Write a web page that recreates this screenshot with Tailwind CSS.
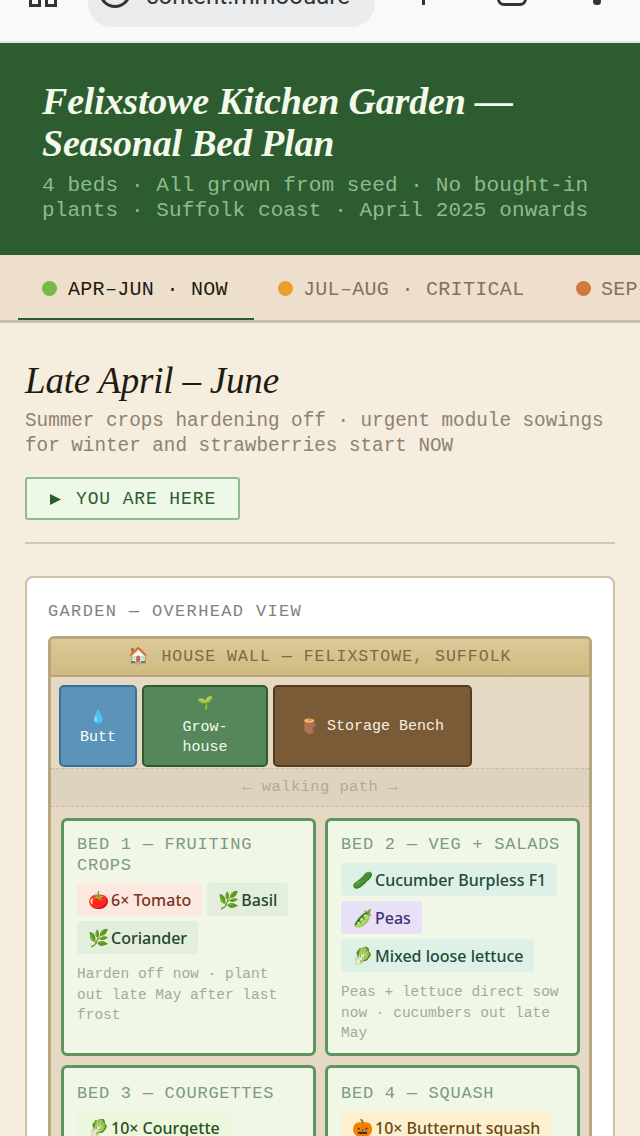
<!DOCTYPE html>
<html lang="en">
<head>
  <meta charset="UTF-8" />
  <meta name="viewport" content="width=device-width, initial-scale=1.0" />
  <title>Felixstowe Kitchen Garden</title>
  <script src="https://cdn.jsdelivr.net/npm/@tailwindcss/browser@4"></script>
</head>
<body class="bg-[#f5eddd] h-[1136px] overflow-hidden font-['Liberation_Mono',monospace] text-[#1f1a12]">

  <!-- browser bar, cut off at the top -->
  <div class="h-[43px] bg-[#f8f9fb] border-b-2 border-[#e3e6e8] overflow-hidden relative">
    <svg class="absolute left-[28px] top-0" width="30" height="8" viewBox="0 0 30 8" fill="none" stroke="#333" stroke-width="3"><path d="M2.5 0v5.5h9V0M18.500 0v5.500h9V0"/></svg>
    <div class="absolute left-[88px] top-[-20px] w-[287px] h-[47px] rounded-[24px] bg-[#e9ebed] flex items-center pl-[11px] gap-[15px]">
      <div class="w-[32px] h-[32px] rounded-full border-[3px] border-[#333] shrink-0 relative top-[-12px]"></div>
      <span class="text-[24px] text-[#333] relative top-[-8px] whitespace-nowrap font-['Roboto',sans-serif]">content.mmoouare</span>
    </div>
    <div class="absolute left-[422px] top-0 w-[3px] h-[5px] bg-[#333]"></div>
    <div class="absolute left-[497px] top-[-21px] w-[30px] h-[27px] rounded-[7px] border-[3px] border-[#333]"></div>
    <div class="absolute left-[593px] top-[-2px] w-[8px] h-[7px] rounded-full bg-[#333]"></div>
  </div>

  <!-- header -->
  <header class="h-[212px] bg-[#2d5c30] pl-[42px] pr-[40px] pt-[37px]">
    <h1 class="font-['Liberation_Serif',serif] italic font-bold text-[38px] leading-[42px] text-[#f3faec] tracking-[-0.2px]">Felixstowe Kitchen Garden —<br>Seasonal Bed Plan</h1>
    <p class="mt-[9px] text-[21px] leading-[25px] tracking-[0.1px] text-[#8fbb8d]">4 beds · All grown from seed · No bought-in plants · Suffolk coast · April 2025 onwards</p>
  </header>

  <!-- season tabs -->
  <nav class="h-[68px] bg-[#eddfcc] border-b-[3px] border-[#cdbfa9] flex overflow-hidden pl-[18px] text-[20px] tracking-[0.3px]">
    <div class="w-[236px] shrink-0 h-[65px] pl-[24px] pt-[4px] flex items-center gap-[11px] border-b-2 border-[#2d5c30] text-[#1f1a12]">
      <span class="w-[15px] h-[15px] rounded-full bg-[#7ab648] shrink-0"></span><span class="whitespace-nowrap relative top-[1px]">APR–JUN · NOW</span>
    </div>
    <div class="w-[322px] shrink-0 pl-[24px] pt-[2px] flex items-center gap-[10px] text-[#7f7364]">
      <span class="w-[15px] h-[15px] rounded-full bg-[#e9a02d] shrink-0"></span><span class="whitespace-nowrap relative top-[1px]">JUL–AUG · CRITICAL</span>
    </div>
    <div class="shrink-0 pt-[2px] flex items-center gap-[10px] text-[#7f7364]">
      <span class="w-[15px] h-[15px] rounded-full bg-[#cf7a3d] shrink-0"></span><span class="whitespace-nowrap relative top-[1px]">SEP–OCT</span>
    </div>
  </nav>

  <main class="px-[25px] pt-[38px]">
    <h2 class="font-['Liberation_Serif',serif] italic text-[37px] leading-[40px] tracking-[-0.2px] text-[#1f1a12]">Late April – June</h2>
    <p class="mt-[8px] text-[19.3px] leading-[25px] text-[#8d8272]">Summer crops hardening off · urgent module sowings for winter and strawberries start NOW</p>
    <div class="mt-[18px] w-[215px] h-[43px] pl-[23px] pt-[2px] flex items-center gap-[15px] border-2 border-[#8dbd8c] rounded-[3px] bg-[#eef8e6] text-[#2d5c30] text-[18px] tracking-[0.87px] whitespace-nowrap">
      <svg width="11" height="11" viewBox="0 0 11 11" fill="#2d5c30"><path d="M0 0l11 5.500L0 11z"/></svg><span>YOU ARE HERE</span>
    </div>
    <div class="mt-[22px] h-[2px] bg-[#d3c7b3]"></div>

    <section class="mt-[32px] bg-white border-2 border-[#cdbfa9] rounded-[8px] px-[21px] pt-[23px] h-[700px]">
      <div class="text-[17px] leading-[22px] tracking-[1.35px] text-[#87807a]">GARDEN — OVERHEAD VIEW</div>

      <div class="mt-[13px] border-[3px] border-[#b8a67f] rounded-[6px] bg-[#e5d9c3] overflow-hidden">
        <div class="h-[38px] bg-gradient-to-b from-[#dcc998] to-[#cfba80] border-b-[2px] border-[#b8a67f] flex items-center justify-center text-[16.5px] tracking-[1.04px] text-[#7a6a48] whitespace-nowrap">🏠 HOUSE WALL — FELIXSTOWE, SUFFOLK</div>

        <!-- structures along the wall -->
        <div class="flex gap-[5px] pl-[8px] pt-[8px] h-[91px]">
          <div class="w-[78px] h-[82px] pt-[4px] bg-[#5b94b8] border-2 border-[#3b7099] rounded-[5px] flex flex-col items-center justify-center text-[15px] leading-[20px] text-white">
            <span class="text-[13px] leading-[20px]">💧</span><span>Butt</span>
          </div>
          <div class="w-[126px] h-[82px] pt-[4px] bg-[#55875a] border-2 border-[#2d5c30] rounded-[5px] flex flex-col items-center justify-center text-[15px] leading-[20px] text-[#f3faec] text-center">
            <span class="text-[13px] leading-[20px] -translate-y-[4px]">🌱</span><span>Grow-<br>house</span>
          </div>
          <div class="w-[199px] h-[82px] pt-[3px] bg-[#795c37] border-2 border-[#553c20] rounded-[5px] flex items-center justify-center gap-[9px] text-[15px] text-[#f8f0e0]">
            <span class="text-[14px]">🪵</span><span>Storage Bench</span>
          </div>
        </div>

        <div class="h-[39px] border-y border-dashed border-[#c9bda8] bg-[#ddd3bf] flex items-center justify-center text-[15.5px] tracking-[0.4px] text-[#b3a998]">← walking path →</div>

        <div class="grid grid-cols-2 gap-[9px] pl-[10px] pr-[9px] pt-[11px]">
          <div class="h-[238px] border-[3px] border-[#5f9460] rounded-[6px] bg-[#f0f7e6] px-[13px] pt-[13px]">
            <div class="text-[17px] leading-[21px] tracking-[0.75px] text-[#7e9a80]">BED 1 — FRUITING CROPS</div>
            <div class="mt-[7px] flex flex-wrap gap-[5px]">
              <span class="bg-[#fbe9e0] text-[#7a3524] h-[33px] px-[11px] rounded-[3px] flex items-center gap-[2px] whitespace-nowrap font-['Noto_Sans',sans-serif] font-medium text-[16px]"><span class="text-[17px]">🍅</span><span>6× Tomato</span></span>
              <span class="bg-[#e3efdc] text-[#24452a] h-[33px] px-[11px] rounded-[3px] flex items-center gap-[2px] whitespace-nowrap font-['Noto_Sans',sans-serif] font-medium text-[16px]"><span class="text-[17px]">🌿</span><span>Basil</span></span>
              <span class="bg-[#e3efdc] text-[#24452a] h-[33px] px-[11px] rounded-[3px] flex items-center gap-[2px] whitespace-nowrap font-['Noto_Sans',sans-serif] font-medium text-[16px]"><span class="text-[17px]">🌿</span><span>Coriander</span></span>
            </div>
            <p class="mt-[10px] text-[14.5px] leading-[20.5px] text-[#a3aa9c]">Harden off now · plant out late May after last frost</p>
          </div>
          <div class="h-[238px] border-[3px] border-[#5f9460] rounded-[6px] bg-[#f0f7e6] px-[13px] pt-[13px]">
            <div class="text-[17px] leading-[21px] tracking-[0.75px] text-[#7e9a80] whitespace-nowrap">BED 2 — VEG + SALADS</div>
            <div class="mt-[8px] flex flex-wrap gap-[5px]">
              <span class="bg-[#def1e6] text-[#1f4a3a] h-[33px] px-[11px] rounded-[3px] flex items-center gap-[2px] whitespace-nowrap font-['Noto_Sans',sans-serif] font-medium text-[16px]"><span class="text-[17px]">🥒</span><span>Cucumber Burpless F1</span></span>
              <span class="bg-[#e8e0f5] text-[#43307a] h-[33px] px-[11px] rounded-[3px] flex items-center gap-[2px] whitespace-nowrap font-['Noto_Sans',sans-serif] font-medium text-[16px]"><span class="text-[17px]">🫛</span><span>Peas</span></span>
              <span class="bg-[#def1e6] text-[#1f4a3a] h-[33px] px-[11px] rounded-[3px] flex items-center gap-[2px] whitespace-nowrap font-['Noto_Sans',sans-serif] font-medium text-[16px]"><span class="text-[17px]">🥬</span><span>Mixed loose lettuce</span></span>
            </div>
            <p class="mt-[10px] text-[14.5px] leading-[20.5px] text-[#a3aa9c]">Peas + lettuce direct sow now · cucumbers out late May</p>
          </div>
          <div class="h-[150px] border-[3px] border-[#5f9460] rounded-[6px] bg-[#f0f7e6] px-[13px] pt-[15px]">
            <div class="text-[17px] leading-[21px] tracking-[0.75px] text-[#7e9a80]">BED 3 — COURGETTES</div>
            <div class="mt-[7px] flex flex-wrap gap-[5px]">
              <span class="bg-[#ecf8dd] text-[#2a5020] h-[33px] px-[11px] rounded-[3px] flex items-center gap-[2px] whitespace-nowrap font-['Noto_Sans',sans-serif] font-medium text-[16px]"><span class="text-[17px]">🥬</span><span>10× Courgette</span></span>
            </div>
          </div>
          <div class="h-[150px] border-[3px] border-[#5f9460] rounded-[6px] bg-[#f0f7e6] px-[13px] pt-[15px]">
            <div class="text-[17px] leading-[21px] tracking-[0.75px] text-[#7e9a80]">BED 4 — SQUASH</div>
            <div class="mt-[7px] flex flex-wrap gap-[5px]">
              <span class="bg-[#fdf0cf] text-[#6b4a14] h-[33px] px-[11px] rounded-[3px] flex items-center gap-[2px] whitespace-nowrap font-['Noto_Sans',sans-serif] font-medium text-[16px]"><span class="text-[17px]">🎃</span><span>10× Butternut squash</span></span>
            </div>
          </div>
        </div>
      </div>
    </section>
  </main>
</body>
</html>
